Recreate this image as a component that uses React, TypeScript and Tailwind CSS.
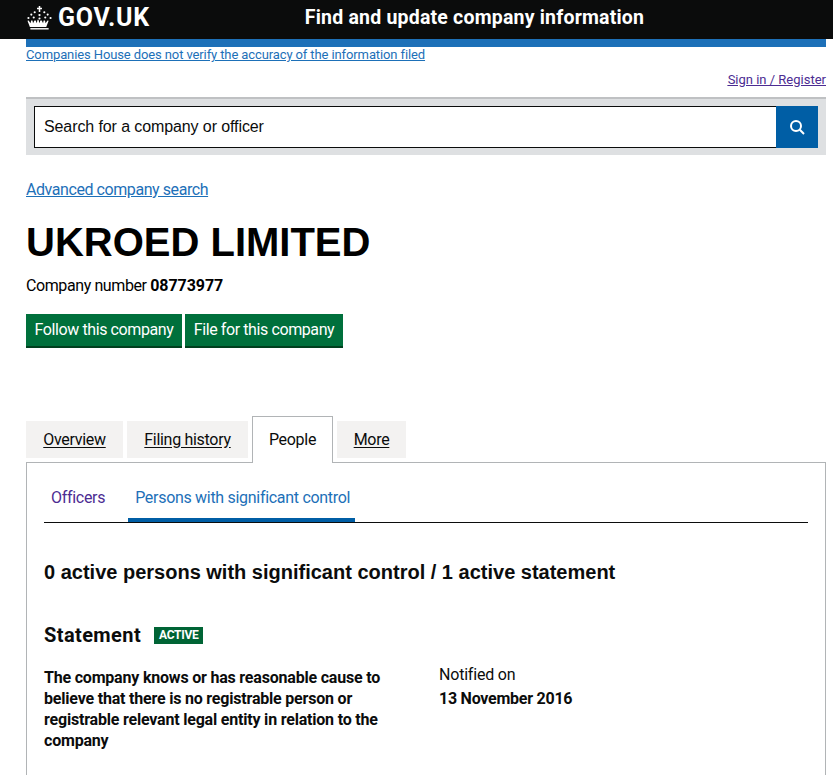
const font = "font-['Roboto',sans-serif]";

function Crown() {
  return (
    <svg viewBox="0 0 28 26" className="w-[27px] h-[25px] fill-white" aria-hidden="true">
      <path d="M13.2 1h1.6v1.8h1.8v1.6h-1.8v3h-1.6v-3h-1.8V2.8h1.8z" />
      <circle cx="14" cy="10.5" r="1.2" />
      <circle cx="14" cy="14" r="1.1" />
      <circle cx="9" cy="7.5" r="1.1" />
      <circle cx="19" cy="7.5" r="1.1" />
      <circle cx="5.5" cy="10" r="1.1" />
      <circle cx="22.5" cy="10" r="1.1" />
      <circle cx="8" cy="13" r="1.1" />
      <circle cx="20" cy="13" r="1.1" />
      <circle cx="2.5" cy="13.5" r="1.1" />
      <circle cx="25.5" cy="13.5" r="1.1" />
      <path d="M1.5 16.5l1.2-.5 2 3 .6-3h1.4l.6 3 1.4-3h1.4l1 3 .9-3.6h1l.9 3.6 1-3h1.4l1.4 3 .6-3h1.4l.6 3 2-3 1.2.5-2.5 6.5H4z" />
      <path d="M4.5 24h19v1.5h-19z" />
    </svg>
  );
}

function Tab({ label, w }: { label: string; w: string }) {
  return (
    <a className={`mt-[5px] flex h-[37px] items-center justify-center bg-[#f3f2f1] tracking-[-0.3px] text-[#0b0c0c] underline underline-offset-2 ${w}`}>
      {label}
    </a>
  );
}

export default function App() {
  return (
    <div className={`${font} h-[775px] overflow-hidden bg-white text-[16px] text-[#0b0c0c]`}>
      <header className="flex h-[39px] items-center bg-[#0b0c0c] pb-[4px] pl-[26px] text-white">
        <Crown />
        <span className="ml-[5px] text-[25px] font-bold tracking-[0.75px]">GOV.UK</span>
        <span className="ml-[155px] text-[19.5px] font-bold tracking-[0.2px]">Find and update company information</span>
      </header>

      <div className="mx-[26px] w-[800px]">
        <div className="h-2 bg-[#1d70b8]" />
        <a className="block h-[16px] text-[13px] leading-[16px] tracking-[-0.11px] text-[#1d70b8] underline">
          Companies House does not verify the accuracy of the information filed
        </a>
        <div className="mt-[8px] flex h-[18px] justify-end text-[13px] leading-[18px] text-[#4c2c92] underline">
          <a>Sign in / Register</a>
        </div>

        <form className="mt-[8px] flex h-[58px] items-start border-t-2 border-[#bfc1c3] bg-[#dee0e2] px-2 pt-[7px]">
          <div className="flex h-[42px] flex-1 items-center border border-r-0 border-[#0b0c0c] bg-white pl-[9px] font-['Liberation_Sans',sans-serif] text-[16px] tracking-[-0.1px]">
            Search for a company or officer
          </div>
          <button type="button" className="flex h-[42px] w-[42px] items-center justify-center bg-[#005ea5]">
            <svg viewBox="0 0 16 16" className="h-4 w-4 fill-none stroke-white stroke-2">
              <circle cx="7" cy="7" r="5" />
              <path d="M10.8 10.8L15 15" />
            </svg>
          </button>
        </form>

        <a className="mt-[25px] block leading-[20px] tracking-[-0.43px] text-[#1d70b8] underline">Advanced company search</a>
        <h1 className="mt-[17px] font-['Liberation_Sans',sans-serif] text-[40px] leading-[50px] font-bold text-black">UKROED LIMITED</h1>
        <p className="mt-[9px] leading-[20px] tracking-[-0.4px] text-black">
          Company number <strong className="tracking-[-0.05px]">08773977</strong>
        </p>

        <div className="mt-[18px] flex gap-[3px] tracking-[-0.4px] text-white">
          <a className="flex h-[34px] w-[156px] items-center justify-center border-b-2 border-[#00401e] bg-[#00703c]">Follow this company</a>
          <a className="flex h-[34px] w-[158px] items-center justify-center border-b-2 border-[#00401e] bg-[#00703c]">File for this company</a>
        </div>

        <nav className="mt-[68px] flex h-[47px] items-start gap-1">
          <Tab label="Overview" w="w-[97px]" />
          <Tab label="Filing history" w="w-[121px]" />
          <span className="relative z-10 flex h-[47px] w-[81px] items-center justify-center border border-b-0 border-[#b1b4b6] bg-white tracking-[-0.3px]">People</span>
          <Tab label="More" w="w-[69px]" />
        </nav>

        <section className="mt-[-1px] h-[400px] border border-[#b1b4b6] px-[17px]">
          <div className="flex h-[60px] border-b border-[#0b0c0c] tracking-[-0.3px] text-[#4c2c92]">
            <a className="flex items-center px-[7px] pt-[11px]">Officers</a>
            <a className="ml-[16px] flex items-center border-b-4 border-[#005ea5] pt-[15px] pr-[5px] pl-[7px] text-[#1d70b8]">Persons with significant control</a>
          </div>

          <h2 className="mt-[35px] font-['Liberation_Sans',sans-serif] text-[20px] leading-[28px] font-bold">
            0 active persons with significant control / 1 active statement
          </h2>

          <div className="mt-[35px] flex items-center">
            <h3 className="text-[20px] leading-[28px] font-bold tracking-[0.4px]">Statement</h3>
            <span className="ml-[13px] bg-[#006435] px-[5px] text-[12px] leading-[17px] font-bold tracking-[-0.3px] text-white">ACTIVE</span>
          </div>

          <div className="mt-[18px] flex">
            <p className="mr-[45px] w-[350px] leading-[21px] font-bold tracking-[-0.2px]">
              The company knows or has reasonable cause to believe that there is no registrable person or registrable relevant legal entity in relation to the company
            </p>
            <div>
              <p className="mt-[-4px] leading-[24px] tracking-[-0.2px]">Notified on</p>
              <p className="leading-[24px] font-bold tracking-[-0.25px]">13 November 2016</p>
            </div>
          </div>
        </section>
      </div>
    </div>
  );
}
